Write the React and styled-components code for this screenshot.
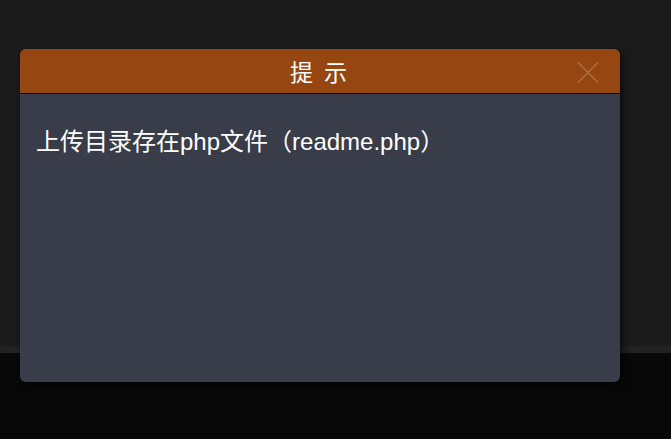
import styled, { createGlobalStyle } from "styled-components";

const Global = createGlobalStyle`
  html, body {
    margin: 0;
    padding: 0;
    background: #080808;
    font-family: "Liberation Sans", Arial, "Noto Sans CJK SC", sans-serif;
  }
`;

const Page = styled.div`
  position: relative;
  width: 671px;
  height: 439px;
  overflow: hidden;
  background: #080808;
`;

const TopArea = styled.div`
  height: 346px;
  background: #1b1b1b;
`;

const Band = styled.div`
  height: 7px;
  background: #222222;
`;

const Dialog = styled.div`
  position: absolute;
  left: 20px;
  top: 49px;
  width: 600px;
  height: 333px;
  display: flex;
  flex-direction: column;
  border-radius: 6px;
  background: #393d49;
  box-shadow: 3px 3px 8px rgba(0, 0, 0, 0.6);
  overflow: hidden;
`;

const Header = styled.div`
  position: relative;
  height: 44px;
  flex-shrink: 0;
  display: flex;
  align-items: center;
  justify-content: center;
  background: #964611;
  border-bottom: 1px solid #000;
  color: #fff;
  font-size: 23px;
  letter-spacing: 3px;
  font-family: "Noto Sans CJK SC", sans-serif;
`;

const Close = styled.button`
  position: absolute;
  right: 21px;
  top: 13px;
  width: 22px;
  height: 21px;
  padding: 0;
  border: 0;
  background: none;
  cursor: pointer;
  display: flex;
`;

const Body = styled.div`
  padding: 34px 16px;
  color: #fff;
  font-size: 24px;
  line-height: 28px;
  font-family: "Liberation Sans", Arial, "Noto Sans CJK SC", sans-serif;
`;

export default function App() {
  return (
    <>
      <Global />
      <Page>
        <TopArea />
        <Band />
        <Dialog>
          <Header>
            提 示
            <Close aria-label="close">
              <svg width="22" height="21" viewBox="0 0 22 21">
                <path d="M1 0.5 L21 20.5 M21 0.5 L1 20.5" stroke="rgba(255,255,255,0.2)" strokeWidth="1.6" />
              </svg>
            </Close>
          </Header>
          <Body>上传目录存在php文件（readme.php）</Body>
        </Dialog>
      </Page>
    </>
  );
}
